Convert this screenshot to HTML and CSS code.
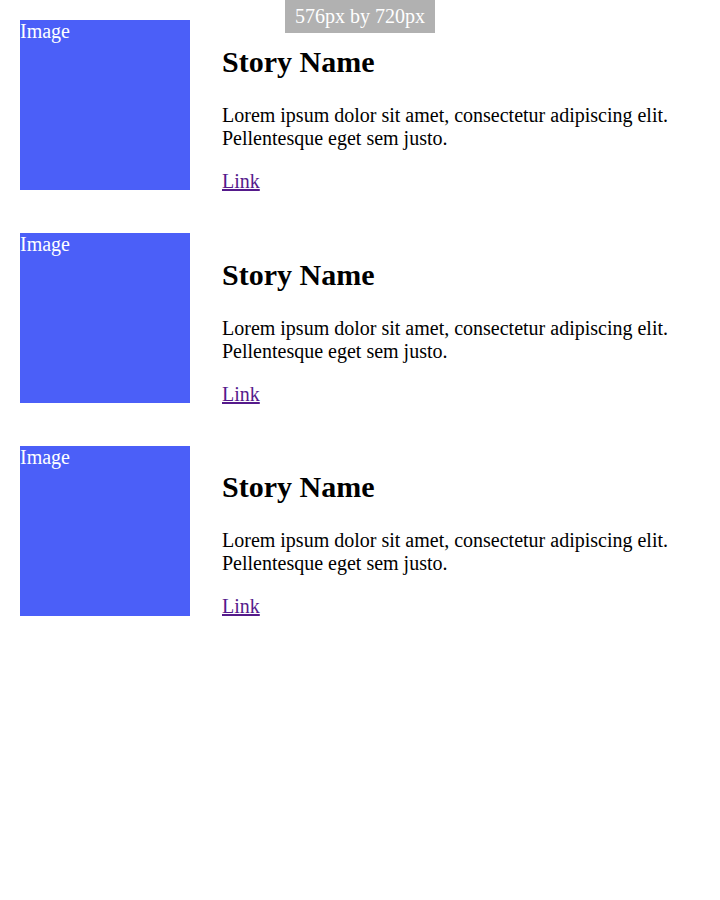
FILE: index.html
```html
<!DOCTYPE html>
<html lang="en">
<head>
<meta charset="utf-8">
<title>Stories</title>
<link rel="stylesheet" href="styles.css">
</head>
<body>
<div class="size-label">576px by 720px</div>
<main class="stories">
  <article class="story">
    <div class="story-image">Image</div>
    <div class="story-body">
      <h2 class="story-title">Story Name</h2>
      <p class="story-text">Lorem ipsum dolor sit amet, consectetur adipiscing elit. Pellentesque eget sem justo.</p>
      <p class="story-link"><a href="#">Link</a></p>
    </div>
  </article>
  <article class="story">
    <div class="story-image">Image</div>
    <div class="story-body">
      <h2 class="story-title">Story Name</h2>
      <p class="story-text">Lorem ipsum dolor sit amet, consectetur adipiscing elit. Pellentesque eget sem justo.</p>
      <p class="story-link"><a href="#">Link</a></p>
    </div>
  </article>
  <article class="story">
    <div class="story-image">Image</div>
    <div class="story-body">
      <h2 class="story-title">Story Name</h2>
      <p class="story-text">Lorem ipsum dolor sit amet, consectetur adipiscing elit. Pellentesque eget sem justo.</p>
      <p class="story-link"><a href="#">Link</a></p>
    </div>
  </article>
</main>
</body>
</html>
```

FILE: styles.css
```css
html, body {
  background: #ffffff;
}

body {
  margin: 20px;
  font-family: "Liberation Serif", "Times New Roman", serif;
  font-size: 20px;
  color: #000000;
}

.size-label {
  position: fixed;
  top: 0;
  left: 50%;
  transform: translateX(-50%);
  background: #b1b1b1;
  color: #ffffff;
  padding: 5px 10px;
  line-height: 23px;
  white-space: nowrap;
}

.stories {
  display: flex;
  flex-direction: column;
  gap: 20px;
}

.story {
  display: flex;
  align-items: flex-start;
  gap: 32px;
}

.story-image {
  flex: 0 0 170px;
  width: 170px;
  height: 170px;
  background: #4b5ff8;
  color: #ffffff;
  line-height: 23px;
}

.story-body {
  flex: 1;
  display: flow-root;
}

.story-title {
  font-size: 30px;
  font-weight: bold;
  margin: 0.83em 0;
}

.story-text,
.story-link {
  margin: 20px 0;
  line-height: 23px;
}

.story-link a {
  color: #551a8b;
}
```
